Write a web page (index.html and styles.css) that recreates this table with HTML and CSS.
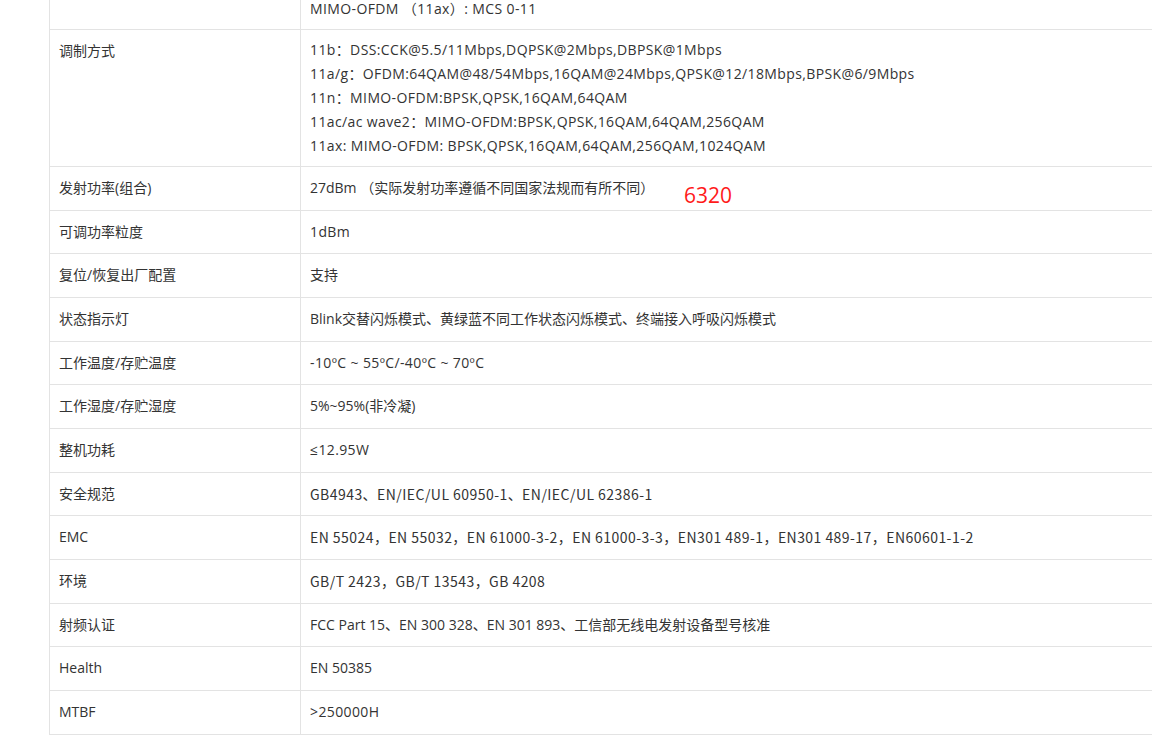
FILE: index.html
```html
<!DOCTYPE html>
<html lang="zh-CN">
<head>
<meta charset="utf-8">
<title>规格参数</title>
<link rel="stylesheet" href="styles.css">
</head>
<body>
<div class="page">
  <table class="spec">
    <colgroup><col class="c-label"><col class="c-value"></colgroup>
    <tbody>
      <tr class="first"><td></td><td class="multi lat"><div>MIMO-OFDM （11ax）: MCS 0-11</div></td></tr>
      <tr><td>调制方式</td><td class="multi lat">
        <div>11b：DSS:CCK@5.5/11Mbps,DQPSK@2Mbps,DBPSK@1Mbps</div>
        <div>11a/g：OFDM:64QAM@48/54Mbps,16QAM@24Mbps,QPSK@12/18Mbps,BPSK@6/9Mbps</div>
        <div>11n：MIMO-OFDM:BPSK,QPSK,16QAM,64QAM</div>
        <div>11ac/ac wave2：MIMO-OFDM:BPSK,QPSK,16QAM,64QAM,256QAM</div>
        <div>11ax: MIMO-OFDM: BPSK,QPSK,16QAM,64QAM,256QAM,1024QAM</div>
      </td></tr>
      <tr><td>发射功率(组合)</td><td>27dBm （实际发射功率遵循不同国家法规而有所不同）</td></tr>
      <tr><td>可调功率粒度</td><td class="lat">1dBm</td></tr>
      <tr><td>复位/恢复出厂配置</td><td>支持</td></tr>
      <tr><td>状态指示灯</td><td>Blink交替闪烁模式、黄绿蓝不同工作状态闪烁模式、终端接入呼吸闪烁模式</td></tr>
      <tr><td>工作温度/存贮温度</td><td class="lat">-10ºC ~ 55ºC/-40ºC ~ 70ºC</td></tr>
      <tr><td>工作湿度/存贮湿度</td><td>5%~95%(非冷凝)</td></tr>
      <tr><td>整机功耗</td><td class="lat">≤12.95W</td></tr>
      <tr><td>安全规范</td><td class="narrow">GB4943、EN/IEC/UL 60950-1、EN/IEC/UL 62386-1</td></tr>
      <tr><td>EMC</td><td class="narrow">EN 55024，EN 55032，EN 61000-3-2，EN 61000-3-3，EN301 489-1，EN301 489-17，EN60601-1-2</td></tr>
      <tr><td>环境</td><td class="narrow">GB/T 2423，GB/T 13543，GB 4208</td></tr>
      <tr><td>射频认证</td><td>FCC Part 15、EN 300 328、EN 301 893、工信部无线电发射设备型号核准</td></tr>
      <tr><td>Health</td><td>EN 50385</td></tr>
      <tr><td>MTBF</td><td class="lat">&gt;250000H</td></tr>
    </tbody>
  </table>
  <span class="mark">6320</span>
</div>
</body>
</html>
```
FILE: styles.css
```css
html, body {
  margin: 0;
  padding: 0;
  background: #fff;
  overflow: hidden;
}
body {
  font-family: "Open Sans", "Noto Sans CJK SC", sans-serif;
  font-size: 14px;
  color: #333;
}
.page {
  position: relative;
  padding-left: 49px;
  width: 1300px;
}
.spec {
  border-collapse: collapse;
  width: 1200px;
  margin-top: -12px;
}
.c-label { width: 251px; }
.spec td {
  border: 1px solid #e3e3e3;
  padding: 8px 9px;
  line-height: 26.67px;
  vertical-align: top;
  text-align: left;
}
.spec td.multi { line-height: 24px; }
.spec td.lat { letter-spacing: 0.38px; }
.spec td.narrow {
  font-family: "Liberation Sans Narrow", "Noto Sans CJK SC", sans-serif;
  letter-spacing: 0.45px;
}
.mark {
  position: absolute;
  left: 684px;
  top: 194px;
  font-size: 21px;
  line-height: 26px;
  color: #ff1a1a;
}
```
